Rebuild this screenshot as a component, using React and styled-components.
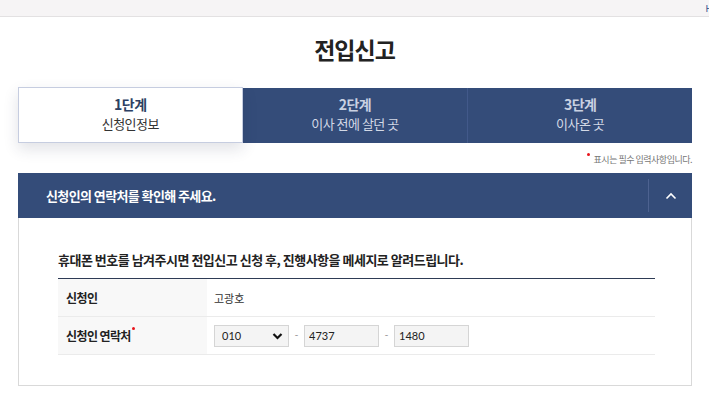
import React from 'react';
import styled, { createGlobalStyle } from 'styled-components';

const GlobalStyle = createGlobalStyle`
  body {
    margin: 0;
    background: #fff;
    font-family: 'Noto Sans CJK KR', 'Noto Sans', sans-serif;
    color: #222;
  }
`;

const TopBar = styled.div`
  height: 16px;
  background: #f6f4f5;
  border-bottom: 1px solid #e3e1e2;
  display: flex;
  justify-content: flex-end;
  align-items: center;
  overflow: hidden;
  font-size: 9px;
  color: #2b4a8a;
  margin-right: -3px;
`;

const Title = styled.h1`
  margin: 0;
  padding-top: 15px;
  height: 55px;
  text-align: center;
  font-size: 23px;
  font-weight: 700;
  letter-spacing: -1px;
  color: #222;
`;

const Container = styled.div`
  margin: 0 17px 0 18px;
`;

const Steps = styled.div`
  display: grid;
  grid-template-columns: repeat(3, 1fr);
  height: 56px;
`;

const Step = styled.div`
  display: flex;
  flex-direction: column;
  align-items: center;
  justify-content: center;
  padding-bottom: 3px;
  box-sizing: border-box;
  letter-spacing: -0.5px;
  background: ${p => (p.$active ? '#fff' : '#344c79')};
  border: ${p => (p.$active ? '1px solid #c6cde0' : 'none')};
  border-left: ${p => (p.$divider ? '1px solid #42598a' : undefined)};
  box-shadow: ${p => (p.$active ? '0 6px 14px rgba(40, 50, 80, 0.14)' : 'none')};
  margin-top: ${p => (p.$active ? '0' : '1px')};
  position: relative;
  z-index: ${p => (p.$active ? 1 : 0)};
`;

const StepNum = styled.div`
  font-size: 14px;
  line-height: 20px;
  font-weight: 700;
  color: ${p => (p.$active ? '#2c3f63' : '#c9d1e2')};
`;

const StepName = styled.div`
  font-size: 13px;
  line-height: 20px;
  color: ${p => (p.$active ? '#333' : '#d3d9e6')};
`;

const Note = styled.div`
  display: flex;
  justify-content: flex-end;
  align-items: flex-start;
  padding: 10px 0 0;
  height: 20px;
  font-size: 9px;
  color: #777;
  letter-spacing: -0.5px;
`;

const RedDot = styled.span`
  display: inline-block;
  width: 3px;
  height: 3px;
  border-radius: 50%;
  background: #e8141b;
  margin: 0 4px 0 0;
`;

const LabelDot = styled(RedDot)`
  margin: 0 0 0 1px;
  vertical-align: 11px;
`;

const PanelHeader = styled.div`
  height: 45px;
  background: #344c79;
  display: flex;
  align-items: center;
  padding-left: 28px;
`;

const PanelTitle = styled.div`
  flex: 1;
  color: #fff;
  font-size: 13px;
  font-weight: 700;
  letter-spacing: -0.6px;
`;

const ToggleBtn = styled.div`
  width: 43px;
  height: 33px;
  border-left: 1px solid #4d6290;
  display: flex;
  align-items: center;
  justify-content: center;
`;

const PanelBody = styled.div`
  border: 1px solid #d9d9d9;
  border-top: none;
  padding: 32px 36px 30px 39px;
`;

const Lead = styled.p`
  margin: 0 0 9px;
  font-size: 13px;
  font-weight: 700;
  letter-spacing: -0.5px;
  color: #222;
`;

const Table = styled.div`
  border-top: 1px solid #2e3b55;
`;

const Row = styled.div`
  display: grid;
  grid-template-columns: 149px 1fr;
  height: 37px;
  border-bottom: 1px solid #ebebeb;
`;

const Label = styled.div`
  background: #f8f8f8;
  display: flex;
  align-items: center;
  padding-left: 8px;
  font-size: 12px;
  font-weight: 700;
  letter-spacing: -0.6px;
  color: #222;
`;

const Value = styled.div`
  display: flex;
  align-items: center;
  padding-left: 7px;
  font-size: 11px;
  color: #333;
`;

const SelectBox = styled.div`
  width: 75px;
  height: 22px;
  box-sizing: border-box;
  background: #f4f4f4;
  border: 1px solid #d5d5d5;
  display: flex;
  align-items: center;
  justify-content: space-between;
  padding: 0 5px 0 7px;
  font-family: 'Lato', 'Noto Sans CJK KR', sans-serif;
  font-size: 11px;
  color: #222;
`;

const Field = styled.input`
  width: 75px;
  height: 22px;
  box-sizing: border-box;
  background: #f4f4f4;
  border: 1px solid #d5d5d5;
  padding: 0 4px;
  font-family: 'Lato', 'Noto Sans CJK KR', sans-serif;
  font-size: 11px;
  color: #222;
  outline: none;
`;

const Dash = styled.span`
  width: 15px;
  text-align: center;
  color: #888;
  font-size: 10px;
  align-self: flex-start;
  margin-top: 9px;
`;

const steps = [
  { num: '1단계', name: '신청인정보' },
  { num: '2단계', name: '이사 전에 살던 곳' },
  { num: '3단계', name: '이사온 곳' }
];

export default function App() {
  return (
    <>
      <GlobalStyle />
      <TopBar>H</TopBar>
      <Title>전입신고</Title>
      <Container>
        <Steps>
          {steps.map((s, i) => (
            <Step key={s.num} $active={i === 0} $divider={i === 2}>
              <StepNum $active={i === 0}>{s.num}</StepNum>
              <StepName $active={i === 0}>{s.name}</StepName>
            </Step>
          ))}
        </Steps>
        <Note>
          <RedDot />
          표시는 필수 입력사항입니다.
        </Note>
        <PanelHeader>
          <PanelTitle>신청인의 연락처를 확인해 주세요.</PanelTitle>
          <ToggleBtn>
            <svg width="12" height="8" viewBox="0 0 12 8">
              <path d="M1.5 6.5 L6 2 L10.5 6.5" fill="none" stroke="#fff" strokeWidth="1.6" />
            </svg>
          </ToggleBtn>
        </PanelHeader>
        <PanelBody>
          <Lead>휴대폰 번호를 남겨주시면 전입신고 신청 후, 진행사항을 메세지로 알려드립니다.</Lead>
          <Table>
            <Row>
              <Label>신청인</Label>
              <Value>고광호</Value>
            </Row>
            <Row>
              <Label>
                <span>
                  신청인 연락처
                  <LabelDot />
                </span>
              </Label>
              <Value>
                <SelectBox>
                  010
                  <svg width="11" height="8" viewBox="0 0 11 8">
                    <path d="M1.5 2 L5.5 6 L9.5 2" fill="none" stroke="#111" strokeWidth="2.2" />
                  </svg>
                </SelectBox>
                <Dash>-</Dash>
                <Field defaultValue="4737" />
                <Dash>-</Dash>
                <Field defaultValue="1480" />
              </Value>
            </Row>
          </Table>
        </PanelBody>
      </Container>
    </>
  );
}
